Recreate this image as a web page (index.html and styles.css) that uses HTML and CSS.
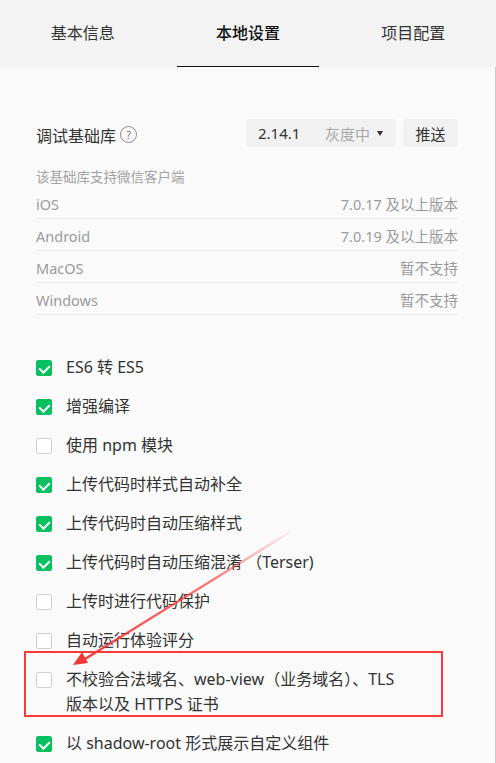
FILE: index.html
```html
<!DOCTYPE html>
<html lang="zh-CN">
<head>
<meta charset="utf-8">
<title>本地设置</title>
<link rel="stylesheet" href="styles.css">
</head>
<body>
<div class="page">
  <nav class="tabs">
    <div class="tab">基本信息</div>
    <div class="tab active">本地设置</div>
    <div class="tab">项目配置</div>
  </nav>
  <main class="content">
    <div class="lib-row">
      <div class="lib-title">调试基础库 <span class="help">?</span></div>
      <div class="lib-actions">
        <div class="select"><span class="ver">2.14.1</span><span class="status">灰度中</span><span class="caret"></span></div>
        <div class="btn">推送</div>
      </div>
    </div>
    <div class="lib-note">该基础库支持微信客户端</div>
    <ul class="clients">
      <li><span>iOS</span><span>7.0.17 及以上版本</span></li>
      <li><span>Android</span><span>7.0.19 及以上版本</span></li>
      <li><span>MacOS</span><span>暂不支持</span></li>
      <li><span>Windows</span><span>暂不支持</span></li>
    </ul>
    <ul class="options">
      <li class="opt"><span class="cb on"></span><span class="lbl">ES6 转 ES5</span></li>
      <li class="opt"><span class="cb on"></span><span class="lbl">增强编译</span></li>
      <li class="opt"><span class="cb"></span><span class="lbl">使用 npm 模块</span></li>
      <li class="opt"><span class="cb on"></span><span class="lbl">上传代码时样式自动补全</span></li>
      <li class="opt"><span class="cb on"></span><span class="lbl">上传代码时自动压缩样式</span></li>
      <li class="opt"><span class="cb on"></span><span class="lbl">上传代码时自动压缩混淆 （Terser)</span></li>
      <li class="opt"><span class="cb"></span><span class="lbl">上传时进行代码保护</span></li>
      <li class="opt"><span class="cb"></span><span class="lbl">自动运行体验评分</span></li>
      <li class="opt"><span class="cb"></span><span class="lbl">不校验合法域名、web-view（业务域名）、TLS<br>版本以及 HTTPS 证书</span></li>
      <li class="opt"><span class="cb on"></span><span class="lbl">以 shadow-root 形式展示自定义组件</span></li>
    </ul>
  </main>
  <div class="highlight"></div>
  <svg class="arrow" width="496" height="763" viewBox="0 0 496 763">
    <defs>
      <linearGradient id="ag" gradientUnits="userSpaceOnUse" x1="290" y1="532" x2="80" y2="662">
        <stop offset="0" stop-color="#ff4a4a" stop-opacity="0.05"/>
        <stop offset="0.35" stop-color="#ff4444" stop-opacity="0.7"/>
        <stop offset="1" stop-color="#f03a3a" stop-opacity="1"/>
      </linearGradient>
    </defs>
    <path d="M290 532 L85 659" stroke="url(#ag)" stroke-width="2.4" fill="none" stroke-linecap="round"/>
    <polygon points="73,665 88,663 82,652" fill="#f03a3a"/>
  </svg>
</div>
</body>
</html>
```

FILE: styles.css
```css
* { box-sizing: border-box; }
html, body { margin: 0; padding: 0; }
body {
  font-family: "Noto Sans", "Noto Sans CJK SC", sans-serif;
  color: #333;
  background: #fafafa;
}
.page {
  position: relative;
  width: 496px;
  height: 763px;
  overflow: hidden;
}
.tabs {
  display: grid;
  grid-template-columns: 1fr 1fr 1fr;
  height: 67px;
  background: #f3f3f3;
}
.tab {
  position: relative;
  display: flex;
  align-items: center;
  justify-content: center;
  font-size: 16px;
  color: #333;
  padding-bottom: 3px;
}
.tab.active { color: #111; font-weight: 500; }
.tab.active::after {
  content: "";
  position: absolute;
  bottom: 0;
  left: 50%;
  width: 142px;
  margin-left: -71px;
  height: 1.5px;
  background: #111;
}
.content {
  height: 696px;
  border-right: 1px solid #c8c8c8;
  padding: 52px 37px 0 36px;
}
.lib-row {
  display: flex;
  justify-content: space-between;
  align-items: center;
  height: 28px;
}
.lib-title {
  display: flex;
  align-items: center;
  font-size: 16px;
  color: #333;
  margin-top: 3px;
}
.help {
  display: inline-flex;
  align-items: center;
  justify-content: center;
  width: 17px;
  height: 17px;
  margin-left: 4px;
  border: 1px solid #888;
  border-radius: 50%;
  font-size: 11px;
  color: #777;
  line-height: 1;
}
.lib-actions { display: flex; gap: 7px; }
.select {
  display: flex;
  align-items: center;
  width: 150px;
  height: 28px;
  padding-left: 12px;
  background: #f1f1f1;
  border-radius: 4px;
  font-size: 15px;
}
.ver { color: #333; width: 67px; }
.status { color: #a8a8a8; }
.caret {
  width: 0; height: 0;
  margin-left: 7px;
  border-left: 3.5px solid transparent;
  border-right: 3.5px solid transparent;
  border-top: 5px solid #333;
}
.btn {
  width: 55px;
  height: 28px;
  display: flex;
  align-items: center;
  justify-content: center;
  background: #f1f1f1;
  border-radius: 4px;
  font-size: 15px;
  color: #333;
}
.lib-note {
  margin-top: 20px;
  line-height: 20px;
  font-size: 13.5px;
  color: #a3a3a3;
}
.clients { list-style: none; margin: 0; padding: 0; }
.clients li {
  display: flex;
  justify-content: space-between;
  align-items: center;
  height: 32px;
  padding-top: 2px;
  border-bottom: 1px solid #ececec;
  font-size: 14.5px;
  color: #9a9a9a;
}
.options { list-style: none; margin: 33px 0 0; padding: 0; }
.opt {
  display: flex;
  align-items: flex-start;
  padding: 7px 0;
}
.cb {
  flex: none;
  width: 16px;
  height: 16px;
  margin-top: 4.5px;
  border: 1px solid #cfcfcf;
  border-radius: 2px;
  background: #fff;
  position: relative;
}
.cb.on { background: #07c160; border-color: #07c160; }
.cb.on::after {
  content: "";
  position: absolute;
  left: 4px;
  top: 2px;
  width: 5px;
  height: 8px;
  border-right: 2px solid #fff;
  border-bottom: 2px solid #fff;
  transform: rotate(45deg);
}
.lbl {
  margin-left: 14px;
  font-size: 16px;
  line-height: 25px;
  color: #333;
}
.highlight {
  position: absolute;
  left: 24px;
  top: 651px;
  width: 419px;
  height: 66px;
  border: 2px solid #f43a3a;
}
.arrow {
  position: absolute;
  left: 0;
  top: 0;
  pointer-events: none;
}
```
